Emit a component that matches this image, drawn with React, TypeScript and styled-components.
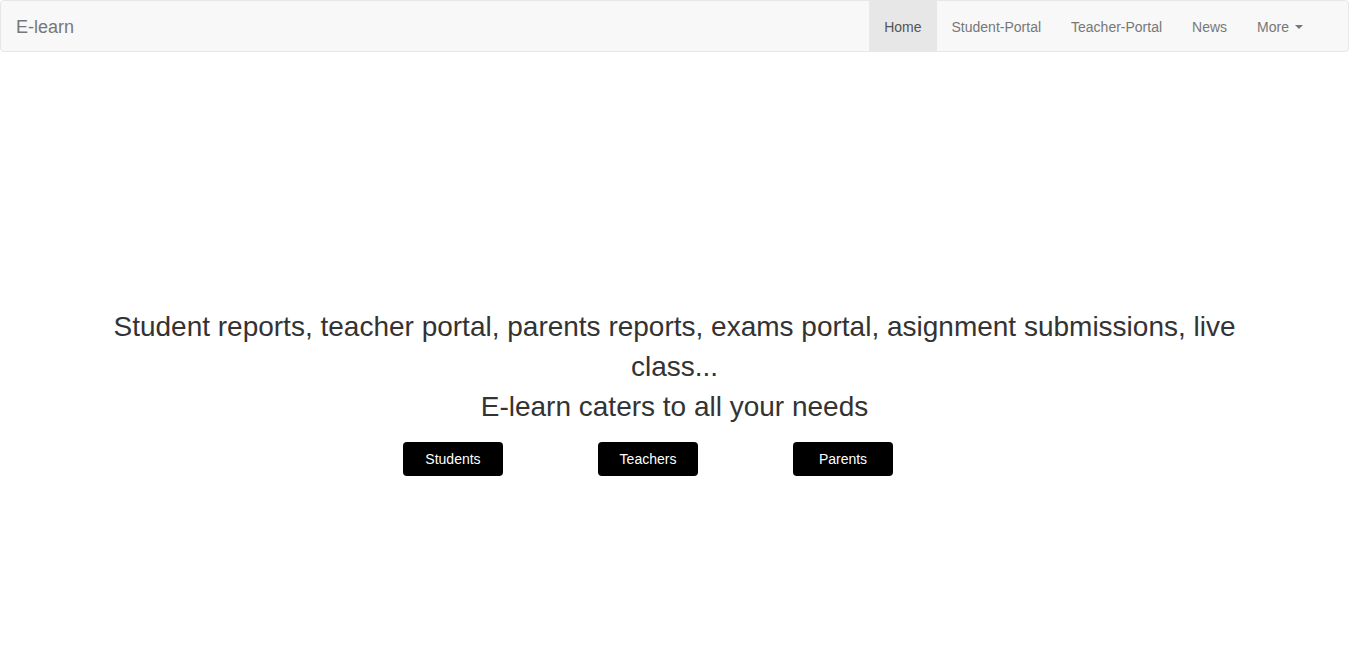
import React from "react";
import styled, { createGlobalStyle } from "styled-components";

const Global = createGlobalStyle`
  html, body { margin: 0; padding: 0; background: #fff; }
  body {
    font-family: "Liberation Sans", Arial, Helvetica, sans-serif;
    font-size: 14px;
    line-height: 1.42857;
    color: #333;
  }
  * { box-sizing: border-box; }
`;

const Page = styled.div`
  width: calc(100% - 17px);
`;

const Navbar = styled.nav`
  display: flex;
  align-items: stretch;
  justify-content: space-between;
  height: 52px;
  background: #f8f8f8;
  border: 1px solid #e7e7e7;
  border-radius: 4px;
  padding: 0 30px 0 0;
`;

const Brand = styled.a`
  display: block;
  padding: 16px 15px 14px;
  font-size: 18px;
  line-height: 20px;
  color: #777;
  text-decoration: none;
`;

const NavList = styled.ul`
  display: flex;
  list-style: none;
  margin: 0;
  padding: 0;
`;

const NavLink = styled.a<{ $active?: boolean }>`
  display: flex;
  align-items: center;
  height: 50px;
  padding: 1px 15px 0;
  font-size: 14px;
  line-height: 20px;
  color: ${(p) => (p.$active ? "#555" : "#777")};
  background: ${(p) => (p.$active ? "#e7e7e7" : "transparent")};
  text-decoration: none;
`;

const Caret = styled.span`
  display: inline-block;
  width: 0;
  height: 0;
  margin-left: 6px;
  margin-top: 1px;
  border-top: 4px solid #777;
  border-left: 4px solid transparent;
  border-right: 4px solid transparent;
`;

const Hero = styled.section`
  padding: 255px 100px 0;
  text-align: center;
`;

const Lead = styled.h2`
  margin: 0;
  font-size: 28px;
  font-weight: 400;
  line-height: 40px;
  color: #333;
`;

const ButtonRow = styled.div`
  display: flex;
  justify-content: center;
  gap: 95px;
  margin-top: 15px;
  padding-right: 53px;
`;

const Button = styled.button`
  width: 100px;
  height: 34px;
  border: none;
  border-radius: 4px;
  background: #000;
  color: #fff;
  font-family: inherit;
  font-size: 14px;
  cursor: pointer;
`;

export default function App() {
  return (
    <Page>
      <Global />
      <Navbar>
        <Brand href="#">E-learn</Brand>
        <NavList>
          <li><NavLink href="#" $active>Home</NavLink></li>
          <li><NavLink href="#">Student-Portal</NavLink></li>
          <li><NavLink href="#">Teacher-Portal</NavLink></li>
          <li><NavLink href="#">News</NavLink></li>
          <li><NavLink href="#">More<Caret /></NavLink></li>
        </NavList>
      </Navbar>
      <Hero>
        <Lead>
          Student reports, teacher portal, parents reports, exams portal, asignment submissions, live class...
          <br />
          E-learn caters to all your needs
        </Lead>
        <ButtonRow>
          <Button>Students</Button>
          <Button>Teachers</Button>
          <Button>Parents</Button>
        </ButtonRow>
      </Hero>
    </Page>
  );
}
